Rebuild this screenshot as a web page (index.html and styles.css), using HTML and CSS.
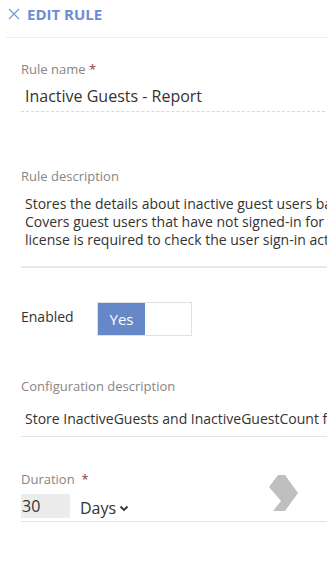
FILE: index.html
```html
<!DOCTYPE html>
<html>
  <head>
    <title>Edit Rule</title>
    <link rel="stylesheet" href="styles.css">
  </head>
  <body>
    <header class="panel-head">
      <svg class="close" width="12" height="12" viewBox="0 0 12 12">
        <path d="M1 1 L11 11 M11 1 L1 11" stroke="#7d97d6" stroke-width="1.2" fill="none"/>
      </svg>
      <span class="title">EDIT RULE</span>
    </header>
    <main class="form">
      <div class="field">
        <label class="label">Rule name <span class="req">*</span></label>
        <div class="value dashed">Inactive Guests - Report</div>
      </div>
      <div class="field desc">
        <label class="label">Rule description</label>
        <div class="value multi">Stores the details about inactive guest users based on last sign-in.<br>Covers guest users that have not signed-in for a given period. A premium<br>license is required to check the user sign-in activity.</div>
      </div>
      <div class="row-enabled">
        <span class="enabled-label">Enabled</span>
        <div class="toggle">
          <span class="on">Yes</span>
          <span class="off"></span>
        </div>
      </div>
      <div class="field config">
        <label class="label">Configuration description</label>
        <div class="value single">Store InactiveGuests and InactiveGuestCount for reporting</div>
      </div>
      <div class="field duration">
        <label class="label">Duration&nbsp; <span class="req">*</span></label>
        <div class="duration-row">
          <span class="num">30</span>
          <span class="unit">Days
            <svg width="10" height="7" viewBox="0 0 10 7"><path d="M1.5 1.5 L5 5 L8.5 1.5" stroke="#333" stroke-width="1.8" fill="none"/></svg>
          </span>
          <svg class="arrow" width="30" height="38" viewBox="0 0 30 38">
            <polygon points="10,1 17,1 30,19 17,37 5,37 13,27 1,13" fill="#bfbfbf"/>
          </svg>
        </div>
      </div>
    </main>
  </body>
</html>
```

FILE: styles.css
```css
* { box-sizing: border-box; }
body {
  margin: 0;
  font-family: "Open Sans", sans-serif;
  color: #333;
  background: #fff;
  overflow: hidden;
}
.panel-head {
  display: flex;
  align-items: center;
  height: 38px;
  margin-left: 6px;
  padding: 0 0 10px 1px;
  border-bottom: 1px solid #ececec;
}
.close { margin: 1px 7px 0 1px; }
.title {
  color: #6c8dd3;
  font-weight: 700;
  font-size: 15px;
}
.form {
  padding: 0 0 0 21px;
  width: 327px;
}
.label {
  display: block;
  font-size: 13px;
  color: #8a8582;
}
.req { color: #8b3a3a; }
.field { margin-top: 22px; }
.value {
  white-space: nowrap;
  overflow: hidden;
  padding-left: 4px;
}
.dashed {
  margin-top: 7px;
  font-size: 16px;
  height: 27px;
  border-bottom: 1px dashed #d8d8d8;
  margin-right: 2px;
}
.desc { margin-top: 55px; }
.multi {
  margin-top: 10px;
  font-size: 14px;
  line-height: 18px;
  padding-bottom: 17px;
  border-bottom: 2px solid #e8e8e8;
}
.row-enabled {
  display: flex;
  align-items: flex-start;
  margin-top: 34px;
}
.enabled-label {
  font-size: 14px;
  width: 76px;
  padding-top: 5px;
}
.toggle {
  display: flex;
  width: 95px;
  height: 34px;
  border: 1px solid #e0e0e0;
  background: #fff;
}
.toggle .on {
  width: 47px;
  background: #6788c8;
  color: #fff;
  font-size: 15px;
  display: flex;
  align-items: center;
  justify-content: center;
}
.config { margin-top: 41px; }
.single {
  margin-top: 14px;
  font-size: 14px;
  height: 28px;
  border-bottom: 1px solid #e6e6e6;
}
.duration { margin-top: 33px; }
.duration-row {
  display: flex;
  align-items: flex-start;
  height: 28px;
  margin-top: 6px;
  border-bottom: 1px solid #e4e4e4;
}
.num {
  width: 49px;
  height: 24px;
  background: #ececec;
  font-size: 16px;
  line-height: 24px;
  padding-left: 1px;
}
.unit {
  font-size: 16px;
  line-height: 26px;
  margin-left: 10px;
  margin-top: 1px;
  display: flex;
  align-items: center;
  gap: 3px;
}
.arrow { margin: -20px 29px 0 auto; }
```
